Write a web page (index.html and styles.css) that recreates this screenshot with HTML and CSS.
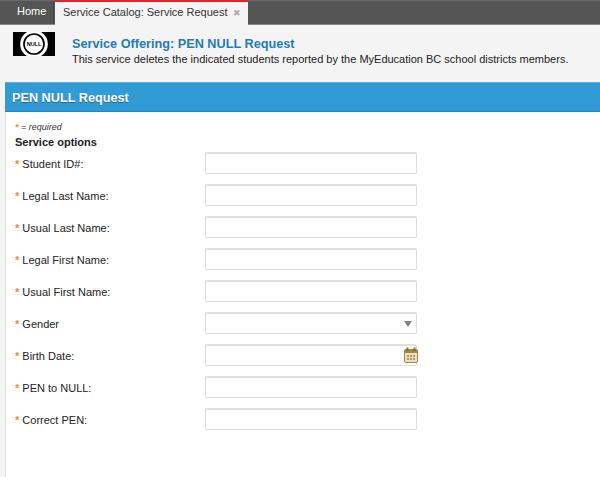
FILE: index.html
```html
<!DOCTYPE html>
<html lang="en">
<head>
    <meta charset="UTF-8">
    <meta name="viewport" content="width=device-width, initial-scale=1.0">
    <title>Service Catalog: Service Request</title>
    <link rel="stylesheet" href="styles.css">
</head>
<body>
    <div class="tabbar">
        <div class="tab">Home</div>
        <div class="tab tab-active">Service Catalog: Service Request <span class="tab-close">&#10006;</span></div>
    </div>

    <div class="offering">
        <svg class="logo" width="42" height="24" viewBox="0 0 42 24">
            <rect x="0" y="0" width="42" height="24" fill="#fff"/>
            <path d="M0 0H14A13.900 13.900 0 0 0 14 24H0Z" fill="#000"/>
            <path d="M42 0H28A13.900 13.900 0 0 1 28 24H42Z" fill="#000"/>
            <circle cx="21" cy="12" r="10" fill="#fff" stroke="#000" stroke-width="1.700"/>
            <text x="21" y="14" text-anchor="middle" class="logo-text">NULL</text>
        </svg>
        <div class="offering-text">
            <div class="offering-title">Service Offering: PEN NULL Request</div>
            <div class="offering-desc">This service deletes the indicated students reported by the MyEducation BC school districts members.</div>
        </div>
    </div>

    <div class="panel">
        <div class="panel-head">PEN NULL Request</div>
        <div class="panel-body">
            <div class="required-note"><span class="star">*</span> = required</div>
            <div class="section-title">Service options</div>

            <div class="row"><label class="field-label"><span class="star">*</span> Student ID#:</label><div class="field"></div></div>
            <div class="row"><label class="field-label"><span class="star">*</span> Legal Last Name:</label><div class="field"></div></div>
            <div class="row"><label class="field-label"><span class="star">*</span> Usual Last Name:</label><div class="field"></div></div>
            <div class="row"><label class="field-label"><span class="star">*</span> Legal First Name:</label><div class="field"></div></div>
            <div class="row"><label class="field-label"><span class="star">*</span> Usual First Name:</label><div class="field"></div></div>
            <div class="row">
                <label class="field-label"><span class="star">*</span> Gender</label>
                <div class="field field-select"><span class="caret"></span></div>
            </div>
            <div class="row">
                <label class="field-label"><span class="star">*</span> Birth Date:</label>
                <div class="field field-date">
                    <svg class="cal" width="14" height="16" viewBox="0 0 14 16">
                        <rect x="0.5" y="2.500" width="13" height="13" rx="1.500" fill="#eadfc4" stroke="#a5853f"/>
                        <rect x="1" y="3" width="12" height="3" fill="#a5853f"/>
                        <rect x="2.500" y="0.500" width="2" height="3.500" fill="#8a6a2a"/>
                        <rect x="9.500" y="0.500" width="2" height="3.500" fill="#8a6a2a"/>
                        <path d="M3 8h2v2H3zM6 8h2v2H6zM9 8h2v2H9zM3 11h2v2H3zM6 11h2v2H6zM9 11h2v2H9z" fill="#b09a66"/>
                    </svg>
                </div>
            </div>
            <div class="row"><label class="field-label"><span class="star">*</span> PEN to NULL:</label><div class="field"></div></div>
            <div class="row"><label class="field-label"><span class="star">*</span> Correct PEN:</label><div class="field"></div></div>
        </div>
    </div>
</body>
</html>
```

FILE: styles.css
```css
* {
    box-sizing: border-box;
}

html, body {
    height: 100%;
}

body {
    margin: 0;
    font-family: "Liberation Sans", Arial, sans-serif;
    font-size: 11px;
    color: #222;
    background-color: #f4f4f4;
    overflow: hidden;
    display: flex;
    flex-direction: column;
}

.tabbar {
    height: 25px;
    flex: none;
    display: flex;
    align-items: flex-end;
    background-color: #555;
    border-top: 1px solid #6a6a6a;
    border-bottom: 1px solid #8a8a8a;
}

.tab {
    width: 54px;
    height: 23px;
    padding: 4px 0 0 17px;
    color: #fff;
    font-size: 11px;
    border-right: 1px solid #444;
}

.tab-active {
    position: relative;
    top: 1px;
    width: 193px;
    height: 25px;
    margin-left: 1px;
    padding: 4px 0 0 8px;
    color: #333;
    background-color: #f4f4f4;
    border-top: 2px solid #e5242a;
    border-right: none;
    white-space: nowrap;
}

.tab-close {
    color: #aaa;
    font-size: 9px;
    margin-left: 2px;
}

.offering {
    height: 57px;
    flex: none;
    display: flex;
    padding: 7px 0 0 13px;
}

.logo {
    flex: none;
}

.logo-text {
    font-family: "Liberation Sans", Arial, sans-serif;
    font-size: 5.500px;
    font-weight: bold;
    fill: #000;
}

.offering-text {
    margin-left: 17px;
    padding-top: 5px;
}

.offering-title {
    color: #1f7cb5;
    font-size: 12.700px;
    font-weight: bold;
    line-height: 15px;
}

.offering-desc {
    font-size: 11px;
    line-height: 15px;
    white-space: nowrap;
}

.panel {
    flex: 1;
    margin-left: 5px;
    background-color: #fff;
    border-left: 1px solid #e2e2e2;
}

.panel-head {
    height: 30px;
    margin-left: -1px;
    padding: 8px 0 0 7px;
    color: #fff;
    font-size: 12.700px;
    font-weight: bold;
    text-shadow: 0 1px 1px rgba(0, 0, 0, 0.35);
    background-color: #319bd6;
    border-top: 1px solid #5cb0e0;
    border-bottom: 1px solid #1f86c4;
}

.panel-body {
    padding: 9px 0 0 9px;
}

.required-note {
    font-size: 9px;
    font-style: italic;
    line-height: 12px;
    color: #333;
}

.star {
    color: #f58a1f;
    font-weight: bold;
}

.section-title {
    margin-top: 2px;
    margin-bottom: 1px;
    font-size: 11px;
    font-weight: bold;
    line-height: 14px;
}

.row {
    height: 32px;
    display: flex;
    align-items: flex-start;
}

.field-label {
    width: 190px;
    flex: none;
    padding-top: 7px;
    font-size: 11px;
    line-height: 14px;
}

.field {
    position: relative;
    width: 212px;
    height: 22px;
    margin-top: 2px;
    background-color: #fff;
    border: 1px solid #dcdcdc;
    border-top: 2px solid #e0e0e0;
    border-radius: 2px;
}

.caret {
    position: absolute;
    right: 4px;
    top: 7px;
    width: 0;
    height: 0;
    border-left: 4px solid transparent;
    border-right: 4px solid transparent;
    border-top: 6px solid #808080;
}

.cal {
    position: absolute;
    right: -2px;
    top: 1px;
}
```
